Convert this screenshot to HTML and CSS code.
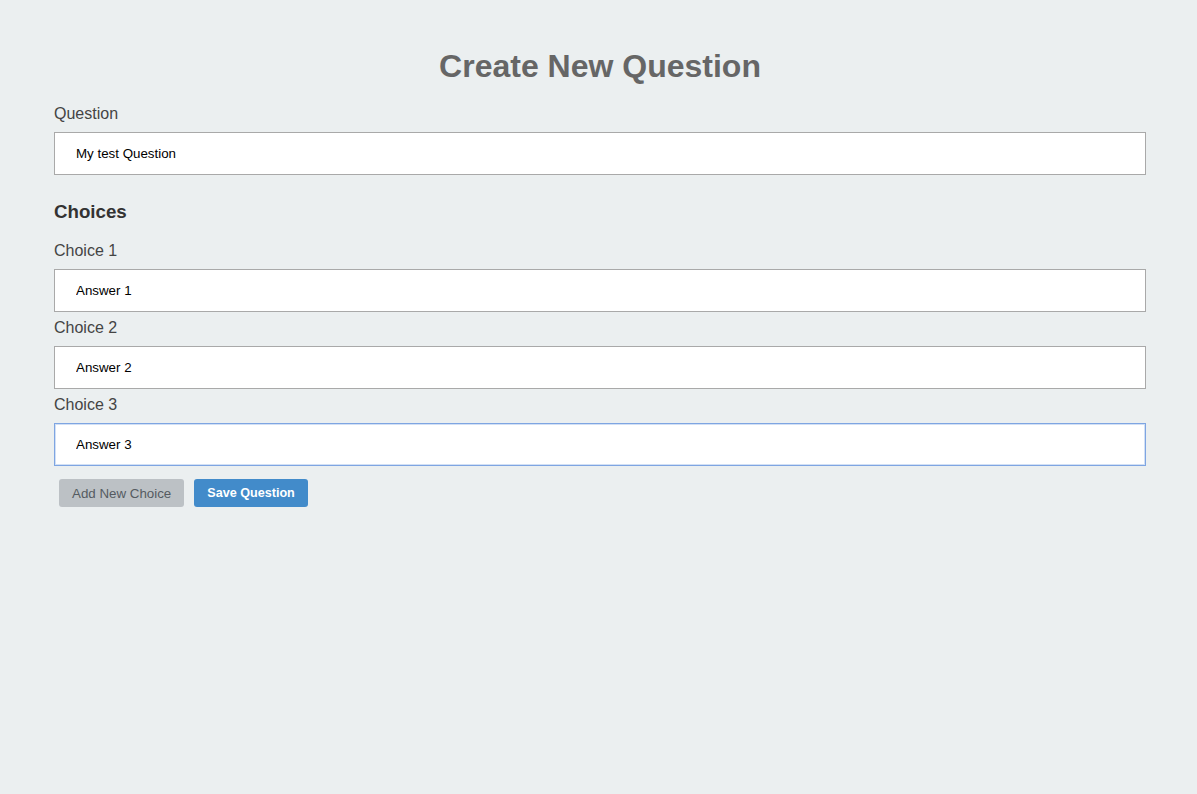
FILE: index.html
```html
<!DOCTYPE html>
<html>
<head>
<meta charset="utf-8">
<link rel="stylesheet" href="styles.css">
</head>
<body>
<div class="page">
  <h1 class="title">Create New Question</h1>
  <label class="label">Question</label>
  <input class="field" type="text" value="My test Question">
  <h2 class="subtitle">Choices</h2>
  <label class="label">Choice 1</label>
  <input class="field" type="text" value="Answer 1">
  <label class="label">Choice 2</label>
  <input class="field" type="text" value="Answer 2">
  <label class="label">Choice 3</label>
  <input class="field field-focus" type="text" value="Answer 3">
  <div class="actions">
    <button class="btn btn-grey">Add New Choice</button>
    <button class="btn btn-blue">Save Question</button>
  </div>
</div>
</body>
</html>
```

FILE: styles.css
```css
html, body {
  margin: 0;
  padding: 0;
  background: #ebeff0;
  font-family: "Liberation Sans", Arial, sans-serif;
}
.page {
  padding: 48px 51px 0 54px;
  display: flex;
  flex-direction: column;
}
.title {
  margin: 0 0 20px 0;
  text-align: center;
  font-size: 32px;
  line-height: 37px;
  font-weight: bold;
  color: #666666;
}
.label {
  display: block;
  font-size: 16px;
  line-height: 18px;
  color: #444444;
  margin-bottom: 9px;
}
.field {
  display: block;
  box-sizing: border-box;
  width: 100%;
  height: 43px;
  margin: 0 0 7px 0;
  padding: 0 21px;
  border: 1px solid #a9a9a9;
  background: #ffffff;
  font-family: "Liberation Sans", Arial, sans-serif;
  font-size: 13.333px;
  color: #000000;
  outline: none;
}
.field-focus {
  border-color: #7ea5e2;
  box-shadow: inset 0 0 0 1px rgba(126, 165, 226, 0.35);
}
.subtitle {
  margin: 19px 0 20px 0;
  font-size: 18.72px;
  line-height: 21px;
  font-weight: bold;
  color: #333333;
}
.actions {
  display: flex;
  gap: 10px;
  margin-top: 6px;
  padding-left: 5px;
}
.btn {
  height: 28px;
  padding: 0 13px;
  border: none;
  border-radius: 3px;
  font-family: "Liberation Sans", Arial, sans-serif;
  font-size: 13.333px;
}
.btn-grey {
  background: #bcc1c5;
  color: #555b61;
}
.btn-blue {
  background: #428bca;
  color: #ffffff;
  font-weight: bold;
  font-size: 12.6px;
}
```
